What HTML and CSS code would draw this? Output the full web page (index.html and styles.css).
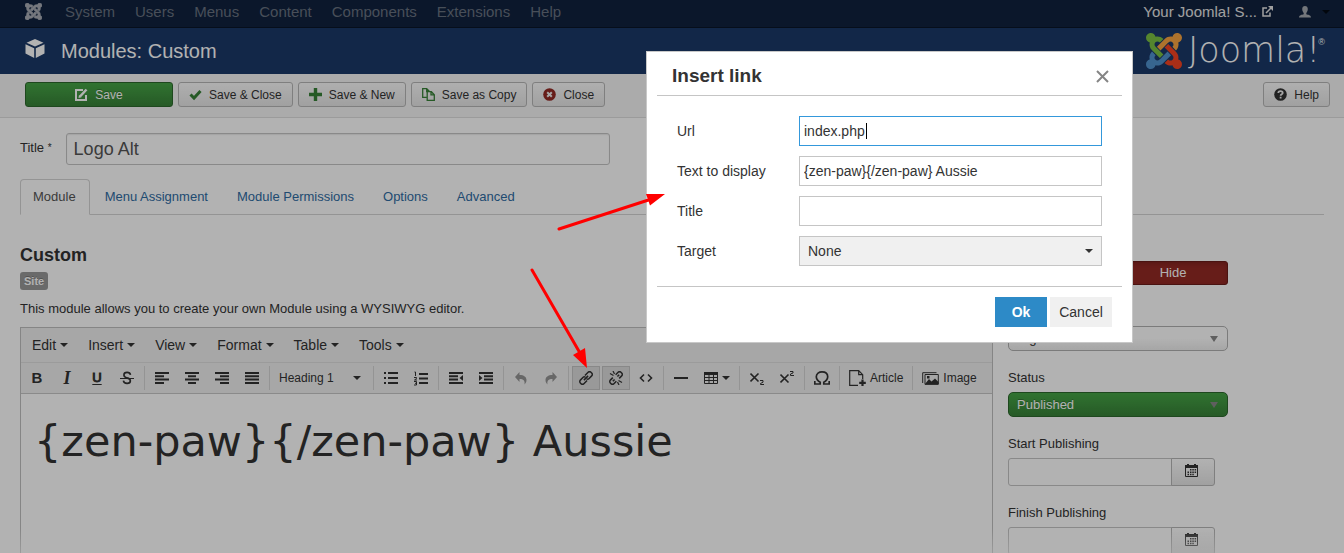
FILE: index.html
```html
<!DOCTYPE html>
<html lang="en">
<head>
<meta charset="utf-8">
<title>Modules: Custom</title>
<link rel="stylesheet" href="styles.css">
</head>
<body>
<svg class="defs" aria-hidden="true">
  <defs>
    <path id="strand" d="M16.719 14.759L14.22 17.26l-2.37 2.37-.462.466c-1.368 1.365-3.297 1.83-5.047 1.397-.327 1.424-1.604 2.49-3.13 2.49C1.438 23.983 0 22.547 0 20.772c0-1.518 1.055-2.789 2.469-3.123-.446-1.76.016-3.705 1.396-5.08l.179-.18 2.37 2.37-.184.181c-.769.779-.769 2.024 0 2.789.771.78 2.022.78 2.787 0l.465-.465 2.367-2.371 2.502-2.506z"/>
    <g id="mark">
      <use href="#strand"/>
      <use href="#strand" transform="rotate(90 12 12)"/>
      <use href="#strand" transform="rotate(180 12 12)"/>
      <use href="#strand" transform="rotate(270 12 12)"/>
    </g>
    <g id="calendar">
      <path fill="#333" d="M0 1h2V0h2v1h5V0h2v1h2v3H0z"/>
      <path fill="none" stroke="#333" d="M.5 3.500v9h12v-9"/>
      <path fill="#333" d="M5 5h1.500v1.500H5zM7.300 5h1.500v1.500H7.300zM9.600 5h1.500v1.500H9.600zM2.500 7.400H4v1.500H2.500zM5 7.400h1.500v1.500H5zM7.300 7.400h1.500v1.500H7.300zM9.600 7.400h1.500v1.500H9.600zM2.500 9.700H4v1.500H2.500zM5 9.700h1.500v1.500H5zM7.300 9.700h1.500v1.500H7.300z"/>
    </g>
  </defs>
</svg>

<div class="app">
  <nav class="navbar">
    <a class="brand" href="#" aria-label="Joomla"><svg width="17" height="17" viewBox="0 0 24 24" fill="#a9adb5" stroke="#a9adb5" stroke-width="1"><use href="#mark"/></svg></a>
    <a href="#">System</a><a href="#">Users</a><a href="#">Menus</a><a href="#">Content</a><a href="#">Components</a><a href="#">Extensions</a><a href="#">Help</a>
    <a class="site" href="#">Your Joomla! S...
      <svg width="11" height="11" viewBox="0 0 11 11" fill="none" stroke="#e6e6e6" stroke-width="1.500"><path d="M5 2H1v8h7V6.500M4 7l5-5"/><path fill="#e6e6e6" stroke="none" d="M6 0h5v5z"/></svg></a>
    <button class="user" aria-label="User menu">
      <svg width="12" height="12" viewBox="0 0 12 12" fill="#a5a9b0"><path d="M3.200 3C3.200 1 4.300 0 6 0s2.800 1 2.800 3c0 2-.8 3-1.500 3.900V8.200C9 8.700 12 9 12 11.500H0C0 9 3 8.700 4.700 8.200V6.900C4 6 3.200 5 3.200 3z"/></svg>
      <span class="caret dark"></span></button>
  </nav>

  <header class="header">
    <svg class="cube" width="20" height="20" viewBox="0 0 20 20" fill="#fff"><path d="M10 0l8.500 3.700L10 7.600 1.500 3.700zM.5 5.200l8.700 4V19L.5 14.500zM19.500 5.200l-8.700 4V19l8.700-4.500z"/></svg>
    <h1>Modules: Custom</h1>
    <div class="logo">
      <svg width="36" height="36" viewBox="0 0 24 24">
        <use href="#strand" fill="#5091cd"/>
        <use href="#strand" fill="#7ac143" transform="rotate(90 12 12)"/>
        <use href="#strand" fill="#f9a541" transform="rotate(180 12 12)"/>
        <use href="#strand" fill="#f44321" transform="rotate(270 12 12)"/>
      </svg>
      <span class="wordmark">Joomla!</span><span class="reg">®</span>
    </div>
  </header>

  <div class="subhead">
    <button class="btn save"><svg width="13" height="13" viewBox="0 0 13 13" fill="none" stroke="#fff" stroke-width="2"><path d="M8 2H1v10h10V7"/><path d="M5 8.500L11.500 1.500" stroke-width="2.500"/><path fill="#fff" stroke="none" d="M3.500 10l.5-3 2.500 2.300z"/></svg>Save</button>
    <button class="btn"><svg width="13" height="12" viewBox="0 0 13 12" fill="none" stroke="#378137" stroke-width="3"><path d="M1.500 5.500L5 9l6.500-7"/></svg>Save &amp; Close</button>
    <button class="btn"><svg width="13" height="13" viewBox="0 0 13 13" fill="none" stroke="#378137" stroke-width="3.400"><path d="M6.500 0v13M0 6.500h13"/></svg>Save &amp; New</button>
    <button class="btn"><svg width="13" height="13" viewBox="0 0 13 13" fill="none" stroke="#378137" stroke-width="1.300"><path d="M4.500 9.300H.7V.7h4L7.300 3.300V4M4.700 .7v3h2.600M5.200 3.700h4.200l2.900 3v5.600H5.200zM9 3.700v3.200h3.300"/></svg>Save as Copy</button>
    <button class="btn"><svg width="13" height="13" viewBox="0 0 13 13"><circle cx="6.500" cy="6.500" r="6.300" fill="#942a25"/><path stroke="#eee" stroke-width="2" d="M4.200 4.200l4.600 4.600M8.800 4.200L4.200 8.800"/></svg>Close</button>
    <button class="btn help"><svg width="13" height="13" viewBox="0 0 13 13"><circle cx="6.500" cy="6.500" r="6.300" fill="#333"/><path fill="none" stroke="#eee" stroke-width="1.800" d="M4.300 5c0-2.600 4.400-2.400 4.400 0 0 1.300-2.100 1.300-2.100 2.800M6.600 8.700v1.800"/></svg>Help</button>
  </div>

  <main class="content">
    <div class="title-row">
      <label for="title">Title <sup>*</sup></label>
      <input id="title" type="text" value="Logo Alt">
    </div>
    <div class="tabs">
      <a class="tab active" href="#">Module</a><a class="tab" href="#">Menu Assignment</a><a class="tab" href="#">Module Permissions</a><a class="tab" href="#">Options</a><a class="tab" href="#">Advanced</a>
    </div>

    <div class="columns">
      <section class="main">
        <h2>Custom</h2>
        <span class="badge">Site</span>
        <p>This module allows you to create your own Module using a WYSIWYG editor.</p>
        <div class="editor">
          <div class="menubar">
            <button>Edit<span class="caret"></span></button><button>Insert<span class="caret"></span></button><button>View<span class="caret"></span></button><button>Format<span class="caret"></span></button><button>Table<span class="caret"></span></button><button>Tools<span class="caret"></span></button>
          </div>
          <div class="toolbar">
            <div class="group">
              <button class="glyph bold">B</button>
              <button class="glyph italic">I</button>
              <button class="glyph under">U</button>
              <button aria-label="Strikethrough"><svg width="14" height="14" viewBox="0 0 14 14" fill="none" stroke="#333" stroke-width="1.600"><path d="M10.500 3.800C10 .6 4 .5 3.900 3.900c0 1.500 1.100 2.400 3.100 3 2 .5 3.400 1.300 3.400 3-.2 3.500-6.600 3.300-7-.3"/><path stroke-width="1" d="M0 7.500h14"/></svg></button>
            </div>
            <div class="group">
              <button aria-label="Align left"><svg width="14" height="12" viewBox="0 0 14 12" stroke="#333" stroke-width="2"><path d="M0 1h14M0 4.300h9M0 7.600h14M0 11h9"/></svg></button>
              <button aria-label="Align center"><svg width="14" height="12" viewBox="0 0 14 12" stroke="#333" stroke-width="2"><path d="M0 1h14M3 4.300h8M0 7.600h14M3 11h8"/></svg></button>
              <button aria-label="Align right"><svg width="14" height="12" viewBox="0 0 14 12" stroke="#333" stroke-width="2"><path d="M0 1h14M5 4.300h9M0 7.600h14M5 11h9"/></svg></button>
              <button aria-label="Justify"><svg width="14" height="12" viewBox="0 0 14 12" stroke="#333" stroke-width="2"><path d="M0 1h14M0 4.300h14M0 7.600h14M0 11h14"/></svg></button>
            </div>
            <div class="group"><button class="format">Heading 1<span class="caret"></span></button></div>
            <div class="group">
              <button aria-label="Bullet list"><svg width="14" height="14" viewBox="0 0 14 14" stroke="#333" stroke-width="2"><path d="M0 2h2M0 7h2M0 12h2M4 2h10M4 7h10M4 12h10"/></svg></button>
              <button aria-label="Numbered list"><svg width="14" height="15" viewBox="0 0 14 15" fill="none" stroke="#333"><path stroke-width="2" d="M5 3h9M5 7.500h9M5 12h9"/><path d="M.5 1h1v4M0 6.500h2.500v1L.5 9h2.500M0 10.500h2.500v3.500H0M1 12.300h1.500"/></svg></button>
            </div>
            <div class="group">
              <button aria-label="Decrease indent"><svg width="14" height="12" viewBox="0 0 14 12" stroke="#333" stroke-width="2"><path d="M0 1h14M0 4.300h9M0 7.600h9M0 11h14"/><path fill="#333" stroke="none" d="M14 3v6l-3.500-3z"/></svg></button>
              <button aria-label="Increase indent"><svg width="14" height="12" viewBox="0 0 14 12" stroke="#333" stroke-width="2"><path d="M0 1h14M5 4.300h9M5 7.600h9M0 11h14"/><path fill="#333" stroke="none" d="M0 3v6l3.500-3z"/></svg></button>
            </div>
            <div class="group">
              <button aria-label="Undo"><svg width="14" height="14" viewBox="0 0 14 14" fill="#949494"><path d="M5.500 1v3C10 4 12.500 6 12.500 9c0 2-.8 3.300-2 4.500 .6-4-1-5.500-5-5.500v3L1 6z"/></svg></button>
              <button aria-label="Redo"><svg width="14" height="14" viewBox="0 0 14 14" fill="#949494"><path d="M8.500 1v3C4 4 1.500 6 1.500 9c0 2 .8 3.300 2 4.500-.6-4 1-5.500 5-5.500v3L13 6z"/></svg></button>
            </div>
            <div class="group">
              <button class="on" aria-label="Insert link"><svg width="14" height="14" viewBox="0 0 14 14" fill="none" stroke="#333" stroke-width="1.500"><g transform="rotate(-45 7 7)"><path d="M6 9.500H1.500a2 2 0 0 1-2-2v-1a2 2 0 0 1 2-2H5.500q1.500 0 1.500 1.500M8 4.500h4.500a2 2 0 0 1 2 2v1a2 2 0 0 1-2 2H8.500Q7 9.500 7 8M4 7h6"/></g></svg></button>
              <button class="on" aria-label="Remove link"><svg width="14" height="14" viewBox="0 0 14 14" fill="none" stroke="#333" stroke-width="1.500"><g transform="rotate(-45 7 7)"><path d="M5 9.500H1.500a2 2 0 0 1-2-2v-1a2 2 0 0 1 2-2H5M9 4.500h3.500a2 2 0 0 1 2 2v1a2 2 0 0 1-2 2H9M2.500 7h2.500M9 7h2.500"/></g><path stroke-width="1.200" d="M1 2.500l3.500 2M4 0l1.500 3M13 11.500l-3.500-2M10 14l-1.500-3"/></svg></button>
              <button aria-label="Source code"><svg width="14" height="10" viewBox="0 0 14 10" fill="none" stroke="#333" stroke-width="1.600"><path d="M5 1.500L1.500 5 5 8.500M9 1.500L12.500 5 9 8.500"/></svg></button>
            </div>
            <div class="group">
              <button aria-label="Horizontal line"><svg width="14" height="2" viewBox="0 0 14 2" fill="#333"><path d="M0 0h14v2H0z"/></svg></button>
              <button class="table-btn" aria-label="Table"><svg width="14" height="12" viewBox="0 0 14 12" fill="none" stroke="#333"><path d="M.5 0v11.500h13V0M0 5.500h14M0 8.500h14M5 2v10M9.500 2v10"/><path fill="#333" stroke="none" d="M0 0h14v3H0z"/></svg><span class="caret"></span></button>
            </div>
            <div class="group">
              <button aria-label="Subscript"><svg width="14" height="14" viewBox="0 0 14 14" fill="none" stroke="#333"><path stroke-width="1.600" d="M.5 2.500l8 8M8.500 2.500l-8 8"/><path d="M10 9.500h3v1.700l-2.500 1.300v1H14"/></svg></button>
              <button aria-label="Superscript"><svg width="14" height="14" viewBox="0 0 14 14" fill="none" stroke="#333"><path stroke-width="1.600" d="M.5 3.500l8 8M8.500 3.500l-8 8"/><path d="M10 .5h3v1.500l-2.500 1v1.500H14"/></svg></button>
            </div>
            <div class="group">
              <button aria-label="Special character"><svg width="16" height="14" viewBox="0 0 16 14" fill="none" stroke="#333" stroke-width="1.700"><path d="M.8 10v3h5.400v-1.800C3 9.500 2.300 7.500 2.300 5.800 2.300 2.500 5 .9 8 .9s5.700 1.600 5.700 4.900c0 1.700-.7 3.700-3.900 5.400V13h5.400v-3"/></svg></button>
            </div>
            <div class="group">
              <button class="labelled"><svg width="17" height="16" viewBox="0 0 17 16" fill="none" stroke="#333" stroke-width="1.200"><path d="M9 15.300H.7V.7h9l4 4V9M9.700 .7v4h4"/><path stroke-width="2.200" d="M13.500 9.500v6.500M10.200 12.800h6.600"/></svg>Article</button>
            </div>
            <div class="group">
              <button class="labelled"><svg width="17" height="13" viewBox="0 0 17 13" fill="none" stroke="#333"><path d="M.7 11V.7H14.500M3 2.500h13.300v9.900H3z"/><path fill="#333" stroke="none" d="M3 12l4-5 2.500 2.500 3.500-3 3.500 3.500v2zM5 4h2.500v2.500H5z"/></svg>Image</button>
            </div>
          </div>
          <div class="page">{zen-paw}{/zen-paw} Aussie</div>
        </div>
      </section>

      <aside class="side">
        <div class="toggle"><button class="hide">Hide</button></div>
        <div class="pick position"><select aria-label="Position"><option>Right</option></select></div>
        <label for="status">Status</label>
        <div class="pick green"><select id="status"><option>Published</option></select></div>
        <label for="start">Start Publishing</label>
        <div class="date"><input id="start" type="text"><button aria-label="Open calendar"><svg width="13" height="13" viewBox="0 0 13 13"><use href="#calendar"/></svg></button></div>
        <label for="finish">Finish Publishing</label>
        <div class="date"><input id="finish" type="text"><button aria-label="Open calendar"><svg width="13" height="13" viewBox="0 0 13 13"><use href="#calendar"/></svg></button></div>
      </aside>
    </div>
  </main>
  <div class="fade"></div>
</div>

<div class="overlay"></div>

<div class="dialog" role="dialog" aria-labelledby="dialog-title">
  <div class="dialog-head">
    <h2 id="dialog-title">Insert link</h2>
    <button class="close" aria-label="Close dialog"><svg width="13" height="13" viewBox="0 0 13 13" stroke="#858585" stroke-width="2"><path d="M1 1l11 11M12 1L1 12"/></svg></button>
  </div>
  <div class="form">
    <label for="url">Url</label>
    <div class="field"><input class="focused" id="url" type="text" value="index.php"><span class="cursor"></span></div>
    <label for="text">Text to display</label>
    <div class="field"><input id="text" type="text" value="{zen-paw}{/zen-paw} Aussie"></div>
    <label for="link-title">Title</label>
    <div class="field"><input id="link-title" type="text"></div>
    <label for="target">Target</label>
    <div class="field target"><select id="target"><option>None</option></select><span class="caret"></span></div>
  </div>
  <div class="dialog-foot"><button class="ok">Ok</button><button class="cancel">Cancel</button></div>
</div>

<svg class="arrows" width="1344" height="553" viewBox="0 0 1344 553" fill="#f00" stroke="#f00" aria-hidden="true">
  <path stroke-width="3" stroke-linecap="round" d="M559 229L650 199.500M532 270L580 353"/>
  <path stroke="none" d="M665 194h-19l4 11.500zM587 368l-14-13 12-7z"/>
</svg>
</body>
</html>
```
FILE: styles.css
```css
* { box-sizing: border-box; }
body {
  margin: 0;
  font: 13px/18px "Liberation Sans", Arial, sans-serif;
  color: #333;
  background: #fff;
}
button, input, select { font: inherit; color: inherit; margin: 0; }
button { padding: 0; border: 0; background: none; }
input, select { outline: 0; border-radius: 0; }
a { text-decoration: none; color: #2f6ca3; }
h1, h2, p { margin: 0; }
svg { display: block; flex: none; }
.defs { position: absolute; width: 0; height: 0; }

.app { height: 100vh; overflow: hidden; display: flex; flex-direction: column; position: relative; }
.caret { flex: none; border: 4px solid transparent; border-top-color: #333; border-bottom: 0; }
.caret.dark { border-top-color: #030a14; }

.navbar {
  flex: none;
  display: flex; align-items: center;
  height: 28px; padding: 0 14px 4px 15px;
  background: #10223e; border-bottom: 1px solid #0a1528;
  font-size: 15px;
}
.navbar a { padding: 0 10px; color: #687180; }
.navbar .brand { padding-right: 13px; }
.navbar .site { margin-left: auto; display: flex; align-items: center; gap: 5px; color: #e6e6e6; }
.user { display: flex; align-items: center; gap: 11px; padding-left: 16px; }

.header {
  flex: none;
  display: flex; align-items: center;
  height: 46px; padding: 0 19px 0 25px;
  background: #1a3867; color: #fff;
}
.header h1 { font-size: 20px; font-weight: normal; line-height: 24px; margin-left: 16px; }
.cube { margin-bottom: 4px; }
.logo { margin-left: auto; display: flex; align-items: center; gap: 6px; }
.wordmark { font: 200 35px/40px "DejaVu Sans", sans-serif; margin-bottom: 2px; }
.reg { font-size: 9px; line-height: 10px; margin: 0 0 18px -8px; }

.subhead {
  flex: none;
  display: flex; align-items: center; gap: 5px;
  height: 44px; padding: 0 14px 2px 25px;
  background: #f5f5f5; border-bottom: 1px solid #dedede;
}
.btn {
  display: flex; align-items: center; justify-content: center; gap: 7px;
  height: 25px; padding: 0 10px;
  font-size: 12px;
  border: 1px solid #b6b6b6; border-radius: 3px;
  background: linear-gradient(#fbfbfb, #e6e6e6);
}
.save {
  width: 148px; color: #fff;
  border-color: #2c672c; background: linear-gradient(#46a546, #378137);
  text-shadow: 0 -1px 0 rgba(0, 0, 0, .25);
}
.help { margin-left: auto; }

.content { flex: 1; min-height: 0; display: flex; flex-direction: column; padding: 15px 20px 0; }
.title-row { display: flex; gap: 14px; }
.title-row label { padding-top: 6px; }
.title-row sup { font-size: 10px; line-height: 0; vertical-align: 1px; }
.title-row input {
  width: 544px; height: 32px; padding: 0 7px; margin-bottom: 14px;
  font-size: 18px; color: #555;
  border: 1px solid #c4c4c4; border-radius: 3px; background: #fff;
  box-shadow: inset 0 1px 1px rgba(0, 0, 0, .08);
}
.tabs { display: flex; gap: 2px; border-bottom: 1px solid #d4d4d4; }
.tab { padding: 8px 13px 8px 12px; border: 1px solid transparent; border-radius: 4px 4px 0 0; margin-bottom: -1px; }
.tab.active { color: #555; border-color: #d4d4d4; border-bottom-color: #fff; background: #fff; }

.columns { flex: 1; min-height: 0; display: grid; grid-template-columns: minmax(0, 1fr) 316px; gap: 15px; }
.main { display: flex; flex-direction: column; align-items: flex-start; min-height: 0; padding-top: 30px; }
.main h2 { font-size: 18px; line-height: 20px; margin-bottom: 7px; }
.badge {
  padding: 0 4px; font-size: 11px; font-weight: bold; line-height: 18px; margin-bottom: 10px;
  color: #fff; background: #999; border-radius: 3px; text-shadow: 0 -1px 0 rgba(0, 0, 0, .25);
}
.main p { margin-bottom: 9px; }

.editor { flex: 1; align-self: stretch; display: flex; flex-direction: column; border: 1px solid #bfbfbf; border-bottom: 0; }
.menubar { display: flex; height: 34px; padding-left: 1px; background: #f0f0f0; }
.menubar button { display: flex; align-items: center; gap: 4px; padding: 0 10px; font-size: 14px; }
.toolbar {
  display: flex; align-items: center;
  height: 32px; padding: 0 2px;
  background: #f0f0f0; border-top: 1px solid #dfdfdf; border-bottom: 1px solid #c6c6c6;
}
.group { display: flex; gap: 2px; padding-right: 3px; }
.group + .group { border-left: 1px solid #d5d5d5; padding-left: 3px; }
.group button { display: flex; align-items: center; justify-content: center; width: 28px; height: 24px; font-size: 12px; }
.group .on { background: #dbdbdb; border: 1px solid #c3c3c3; }
.group .glyph { font-size: 15px; font-weight: bold; }
.group .italic { font-family: "Liberation Serif", serif; font-style: italic; font-size: 18px; }
.group .under { font-weight: normal; text-decoration: underline; text-underline-offset: 2px; -webkit-text-stroke: 1px #333; font-size: 13px; }
.group .format { width: 97px; justify-content: space-between; padding: 0 9px 0 6px; }
.group .table-btn { width: 39px; gap: 4px; }
.group .labelled { width: auto; gap: 4px; padding: 0 6px; }
.page { flex: 1; padding: 17px 13px; font: 43px/60px "DejaVu Sans", sans-serif; }

.side { display: flex; flex-direction: column; align-items: flex-start; padding-top: 46px; }
.toggle { display: flex; justify-content: flex-end; width: 220px; margin-bottom: 41px; }
.hide {
  width: 110px; height: 24px; color: #fff;
  border: 1px solid #6b1c19; border-radius: 0 3px 3px 0; background: #942a25;
  box-shadow: inset 0 2px 4px rgba(0, 0, 0, .15);
}
.pick { position: relative; width: 220px; margin-bottom: 18px; }
.pick select {
  display: block; appearance: none; width: 100%; height: 25px; padding: 0 8px;
  border: 1px solid #b0b0b0; border-radius: 5px;
  background: linear-gradient(#fff 50%, #eee);
}
.pick::after {
  content: ""; position: absolute; right: 10px; top: 10px;
  border: 4px solid transparent; border-top: 6px solid #888; border-bottom: 0;
}
.green select { color: #fff; border-color: #2c672c; background: linear-gradient(#46a546, #378137); text-shadow: 0 -1px 0 rgba(0, 0, 0, .25); }
.side label { margin-bottom: 5px; }
.date { display: flex; margin-bottom: 18px; flex: none; }
.date input { width: 164px; height: 28px; border: 1px solid #c4c4c4; border-radius: 3px 0 0 3px; padding: 0 6px; background: #fff; }
.date button {
  display: flex; align-items: center; justify-content: center; padding-bottom: 3px; padding-right: 4px;
  width: 44px; height: 28px; margin-left: -1px;
  border: 1px solid #b6b6b6; border-radius: 0 3px 3px 0; background: linear-gradient(#fff, #e6e6e6);
}
.fade { position: absolute; left: 0; right: 0; bottom: 0; height: 24px; background: linear-gradient(rgba(255, 255, 255, 0), rgba(255, 255, 255, .5)); }

.overlay { position: fixed; inset: 0; background: rgba(0, 0, 0, .3); }
.dialog {
  position: fixed; top: 51px; left: 646px; width: 487px; padding: 0 10px;
  background: #fff; border: 1px solid #c8c8c8; font-size: 14px;
}
.dialog-head { display: flex; justify-content: space-between; align-items: center; height: 44px; padding: 5px 13px 0 15px; border-bottom: 1px solid #c5c5c5; }
.dialog-head h2 { font-size: 19px; line-height: 24px; }
.form { display: grid; grid-template-columns: 122px 1fr; row-gap: 10px; align-items: center; padding: 20px; }
.field { position: relative; }
.field input, .field select { display: block; width: 100%; height: 30px; padding: 0 4px; border: 1px solid #c5c5c5; background: #fff; }
.field .focused { border-color: #3498db; }
.field select { appearance: none; padding: 0 8px; background: #f0f0f0; }
.field .caret { position: absolute; right: 9px; top: 13px; }
.cursor { position: absolute; left: 67px; top: 7px; width: 1px; height: 16px; background: #000; }
.dialog-foot { display: flex; justify-content: flex-end; gap: 3px; border-top: 1px solid #c5c5c5; padding: 10px 10px 15px; }
.dialog-foot button { height: 30px; }
.ok { width: 52px; color: #fff; font-weight: bold; background: #2d8ac7; }
.cancel { width: 62px; background: #f0f0f0; }
.arrows { position: absolute; left: 0; top: 0; pointer-events: none; }
```
